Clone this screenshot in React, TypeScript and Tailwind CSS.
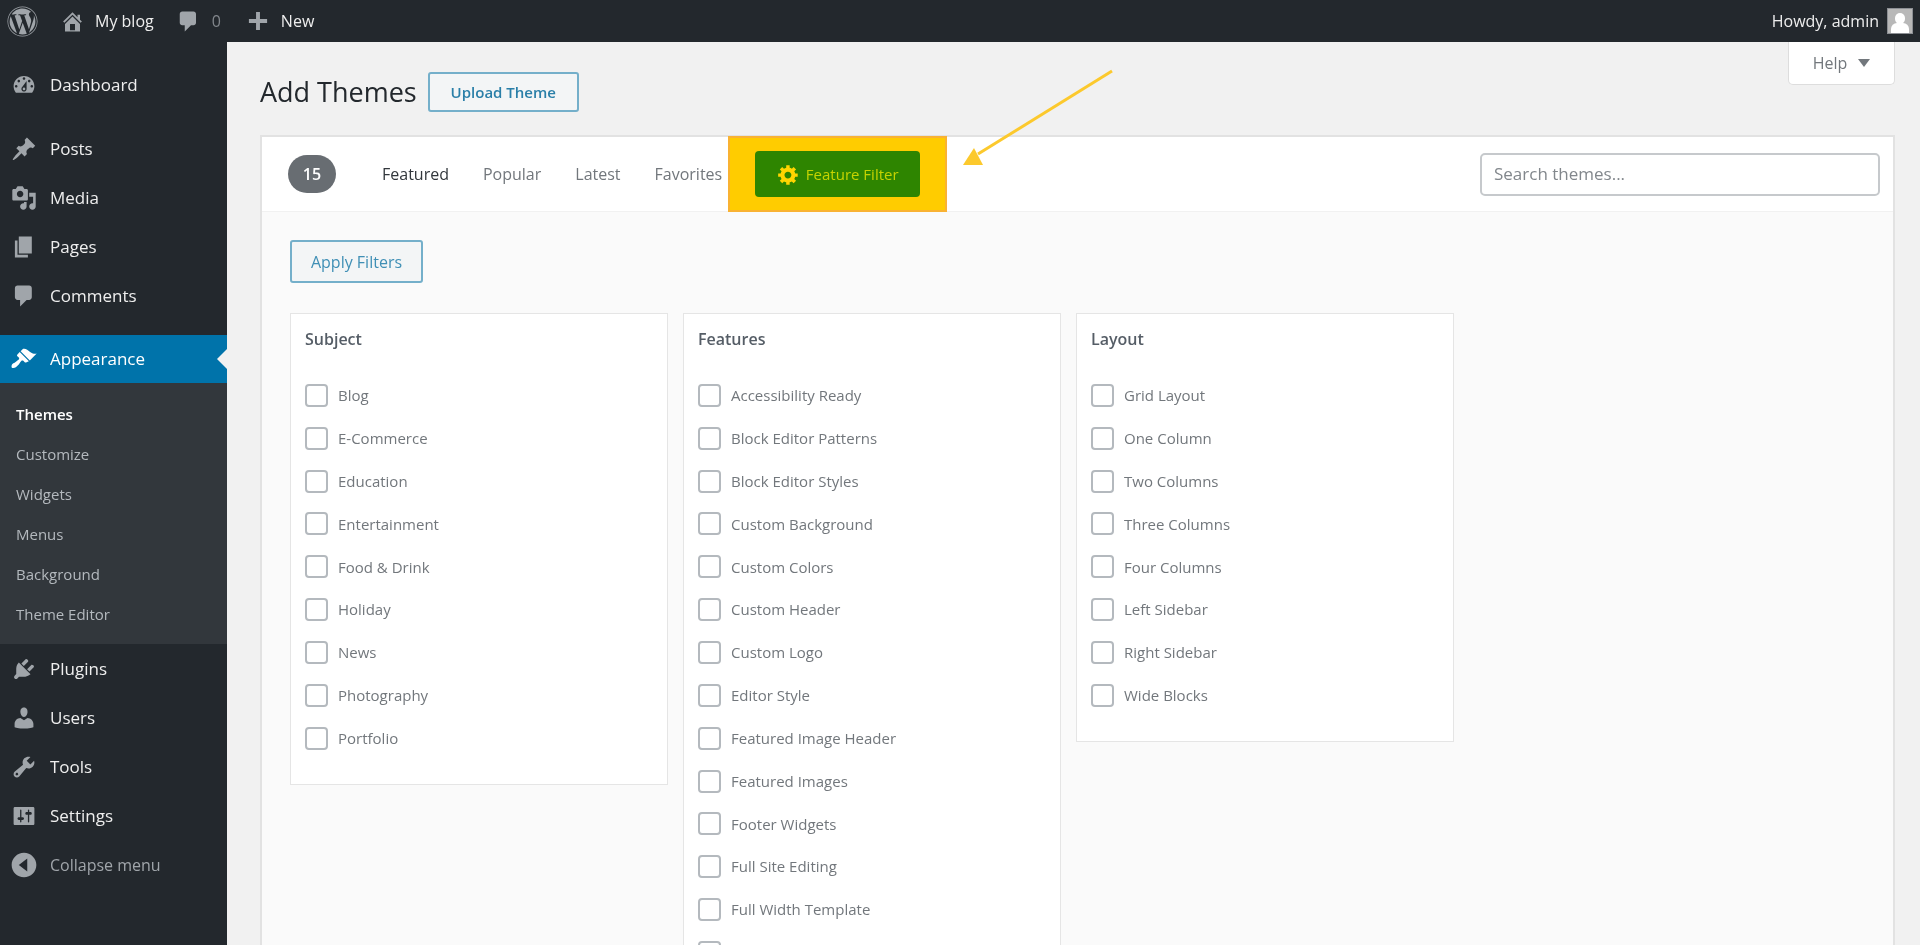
import { FaWordpress } from "react-icons/fa";

const ICONS = {
  home: "M16 8.5l1.53 1.53-1.06 1.06L10 4.62l-6.47 6.47-1.06-1.06L10 2.5l4 4v-2h2v4zm-6-2.46l6 5.99V18H4v-5.97zM12 17v-5H8v5h4z",
  comment: "M5 2h9c1.1 0 2 .9 2 2v7c0 1.1-.9 2-2 2h-2l-5 5v-5H5c-1.1 0-2-.9-2-2V4c0-1.1.9-2 2-2z",
  plus: "M17 8.5v3h-5.5V17h-3v-5.5H3v-3h5.5V3h3v5.5H17z",
  dashboard: "M3.76 16h12.48c1.1-1.37 1.76-3.11 1.76-5 0-4.42-3.58-8-8-8s-8 3.58-8 8c0 1.89.66 3.63 1.76 5zM10 4c.55 0 1 .45 1 1s-.45 1-1 1-1-.45-1-1 .45-1 1-1zM6 6c.55 0 1 .45 1 1s-.45 1-1 1-1-.45-1-1 .45-1 1-1zm8 0c.55 0 1 .45 1 1s-.45 1-1 1-1-.45-1-1 .45-1 1-1zm-5.37 5.55L12 7v6c0 1.1-.9 2-2 2s-2-.9-2-2c0-.57.24-1.08.63-1.45zM4 10c.55 0 1 .45 1 1s-.45 1-1 1-1-.45-1-1 .45-1 1-1zm12 0c.55 0 1 .45 1 1s-.45 1-1 1-1-.45-1-1 .45-1 1-1zm-5 3c0-.55-.45-1-1-1s-1 .45-1 1 .45 1 1 1 1-.45 1-1z",
  post: "M10.44 3.02l1.82-1.82 6.36 6.35-1.83 1.82c-1.05-.68-2.48-.57-3.41.36l-.75.75c-.92.93-1.04 2.35-.35 3.41l-1.83 1.82-2.41-2.41-2.8 2.79c-.42.42-3.38 2.71-3.8 2.29s1.86-3.39 2.28-3.81l2.79-2.79L4.1 9.36l1.83-1.82c1.05.69 2.48.57 3.4-.36l.75-.75c.93-.92 1.05-2.35.36-3.41z",
  media: "M13 11V4c0-.55-.45-1-1-1h-1.67L9 1H5L3.67 3H2c-.55 0-1 .45-1 1v7c0 .55.45 1 1 1h10c.55 0 1-.45 1-1zM7 4.5c1.38 0 2.5 1.12 2.5 2.5S8.38 9.5 7 9.5 4.5 8.38 4.5 7 5.62 4.5 7 4.5zM14 6h5v10.5c0 1.38-1.12 2.5-2.5 2.5S14 17.88 14 16.5s1.12-2.5 2.5-2.5c.17 0 .34.02.5.05V9h-3V6zm-4 8.05V13h2v3.5c0 1.38-1.12 2.5-2.5 2.5S7 17.88 7 16.5 8.12 14 9.5 14c.17 0 .34.02.5.05z",
  page: "M6 15V2h10v13H6zm-1 1h8v2H3V5h2v11z",
  appearance: "M14.48 11.06L7.41 3.99l1.5-1.5c.5-.56 2.3-.47 3.51.32 1.21.8 1.43 1.28 2.91 2.1 1.18.64 2.45 1.26 4.45.85zm-.71.71L6.7 4.7 4.93 6.47c-.39.39-.39 1.02 0 1.41l1.06 1.06c.39.39.39 1.03 0 1.42-.6.6-1.43 1.11-2.21 1.69-.35.26-.7.53-1.01.84C1.43 13.23.4 14.02.4 15.7c0 .54.1.76.3 1 .24.24.5.29 1 .29 1.67 0 2.46-1 3.84-2.37.3-.31.58-.67.84-1.02.58-.78 1.09-1.6 1.69-2.2.39-.39 1.03-.39 1.42 0l1.06 1.06c.39.39 1.02.39 1.41 0z",
  plugins: "M13.11 4.36L9.87 7.6 8 5.73l3.24-3.24c.35-.34 1.05-.2 1.56.32.52.51.66 1.21.31 1.55zm-8 1.77l.91-1.12 9.01 9.01-1.19.84c-.71.71-2.63 1.16-3.82 1.16H6.14L4.9 17.26c-.59.59-1.54.59-2.12 0-.59-.58-.59-1.53 0-2.12l1.24-1.24v-3.88c0-1.13.4-3.19 1.09-3.89zm7.26 3.97l3.24-3.24c.34-.35 1.04-.21 1.55.31.52.51.66 1.21.31 1.55l-3.24 3.25z",
  users: "M10 9.25c-2.27 0-2.73-3.44-2.73-3.44C7 4.02 7.82 2 9.97 2c2.16 0 2.98 2.02 2.71 3.81 0 0-.41 3.44-2.68 3.44zm0 2.57L12.72 10c2.39 0 4.52 2.33 4.52 4.53v2.49s-3.65 1.13-7.24 1.13c-3.65 0-7.24-1.13-7.24-1.13v-2.49c0-2.25 1.94-4.48 4.47-4.48z",
  tools: "M16.68 9.77c-1.34 1.34-3.3 1.67-4.95.99l-5.41 6.52c-.99.99-2.59.99-3.58 0s-.99-2.59 0-3.57l6.52-5.42c-.68-1.65-.35-3.61.99-4.95 1.28-1.28 3.12-1.62 4.72-1.06l-2.89 2.89 2.82 2.82 2.86-2.87c.53 1.58.18 3.39-1.08 4.65zM3.81 16.21c.4.39 1.04.39 1.43 0 .4-.4.4-1.04 0-1.43-.39-.4-1.03-.4-1.43 0-.39.39-.39 1.03 0 1.43z",
  settings: "M18 16V4c0-.55-.45-1-1-1H3c-.55 0-1 .45-1 1v12c0 .55.45 1 1 1h14c.55 0 1-.45 1-1zM8 11h1c.55 0 1 .45 1 1s-.45 1-1 1H8v1.5c0 .28-.22.5-.5.5s-.5-.22-.5-.5V13H6c-.55 0-1-.45-1-1s.45-1 1-1h1V5.5c0-.28.22-.5.5-.5s.5.22.5.5V11zm5-2h-1c-.55 0-1-.45-1-1s.45-1 1-1h1V5.5c0-.28.22-.5.5-.5s.5.22.5.5V7h1c.55 0 1 .45 1 1s-.45 1-1 1h-1v5.5c0 .28-.22.5-.5.5s-.5-.22-.5-.5V9z",
  collapse: "M10 .5c5.22 0 9.5 4.28 9.5 9.5s-4.28 9.5-9.5 9.5S.5 15.22.5 10 4.78.5 10 .5zM12.5 5L6 10l6.500 5V5z",
  gear: "M18 12h-2.18c-.17.7-.44 1.35-.81 1.93l1.54 1.54-2.1 2.1-1.54-1.54c-.58.36-1.23.63-1.91.79V19H8v-2.18c-.68-.16-1.33-.43-1.91-.79l-1.54 1.54-2.12-2.12 1.54-1.54c-.36-.58-.63-1.23-.79-1.91H1V9.03h2.17c.16-.7.44-1.35.8-1.94L2.43 5.55l2.1-2.1 1.54 1.54c.58-.37 1.24-.64 1.93-.81V2h3v2.18c.68.16 1.33.43 1.91.79l1.54-1.54 2.12 2.12-1.54 1.54c.36.59.64 1.24.8 1.94H18V12zm-8.500 1.5c1.66 0 3-1.34 3-3s-1.34-3-3-3-3 1.34-3 3 1.34 3 3 3z",
};

type IconName = keyof typeof ICONS;

const Dashicon = ({ name, className }: { name: IconName; className?: string }) => (
  <svg viewBox="0 0 20 20" className={className} fill="currentColor" fillRule="evenodd">
    <path d={ICONS[name]} />
  </svg>
);

const MenuItem = ({ icon, label, active, muted }: { icon: IconName; label: string; active?: boolean; muted?: boolean }) => (
  <div
    className={
      active
        ? "relative flex items-center h-[48px] pl-[11px] bg-[#0073aa] text-white"
        : "flex items-center h-[49px] pl-[11px] text-[#eeeeee]"
    }
  >
    <Dashicon
      name={icon}
      className={active ? "w-[26px] h-[26px] text-white" : "w-[26px] h-[26px] text-[#a0a5aa]"}
    />
    <span className={muted ? "ml-[13px] text-[16px] text-[#a0a5aa]" : "ml-[13px] text-[17px]"}>{label}</span>
    {active && (
      <span className="absolute right-0 top-[14px] w-0 h-0 border-y-[10px] border-y-transparent border-r-[10px] border-r-[#f1f1f1]" />
    )}
  </div>
);

const Sidebar = () => (
  <aside className="w-[227px] shrink-0 bg-[#23282d] pt-[18px]">
    <MenuItem icon="dashboard" label="Dashboard" />
    <div className="h-[15px]" />
    <MenuItem icon="post" label="Posts" />
    <MenuItem icon="media" label="Media" />
    <MenuItem icon="page" label="Pages" />
    <MenuItem icon="comment" label="Comments" />
    <div className="h-[15px]" />
    <MenuItem icon="appearance" label="Appearance" active />
    <div className="bg-[#32373c] pt-[11px] pb-[10px]">
      <div className="h-[40px] flex items-center pl-[16px] text-[15px] font-semibold text-white">Themes</div>
      {["Customize", "Widgets", "Menus", "Background", "Theme Editor"].map((item) => (
        <div key={item} className="h-[40px] flex items-center pl-[16px] text-[15px] text-[#b4b9be]">
          {item}
        </div>
      ))}
    </div>
    <MenuItem icon="plugins" label="Plugins" />
    <MenuItem icon="users" label="Users" />
    <MenuItem icon="tools" label="Tools" />
    <MenuItem icon="settings" label="Settings" />
    <MenuItem icon="collapse" label="Collapse menu" muted />
  </aside>
);

const TopBar = () => (
  <header className="h-[42px] shrink-0 bg-[#23282d] flex items-center justify-between text-[#eeeeee] text-[16px]">
    <div className="flex items-center">
      <FaWordpress className="ml-[7px] w-[31px] h-[31px] text-[#a0a5aa]" />
      <Dashicon name="home" className="ml-[22px] w-[25px] h-[25px] text-[#a0a5aa]" />
      <span className="ml-[10px] font-medium">My blog</span>
      <Dashicon name="comment" className="ml-[22px] w-[25px] h-[25px] text-[#a0a5aa]" />
      <span className="ml-[11px] text-[#82878c]">0</span>
      <Dashicon name="plus" className="ml-[24px] w-[26px] h-[26px] text-[#a0a5aa]" />
      <span className="ml-[10px] font-medium">New</span>
    </div>
    <div className="flex items-center pr-[7px]">
      <span>Howdy, admin</span>
      <div className="ml-[8px] w-[26px] h-[26px] bg-[#b8b8b8] border border-[#8c8f94] overflow-hidden flex flex-col items-center">
        <div className="mt-[4px] w-[10px] h-[11px] rounded-full bg-white" />
        <div className="mt-[-1px] w-[18px] h-[10px] rounded-t-[6px] bg-white" />
      </div>
    </div>
  </header>
);

const CheckRow = ({ label }: { label: string }) => (
  <label className="flex items-center h-[42.85px] text-[15px] text-[#72777c]">
    <span className="w-[23px] h-[23px] rounded-[4px] border-2 border-[#b4b9be] bg-white shrink-0" />
    <span className="ml-[10px]">{label}</span>
  </label>
);

const FilterGroup = ({ title, items }: { title: string; items: string[] }) => (
  <div className="w-[378px] bg-white border border-[#e5e5e5] pt-[13px] pb-[24px] px-[14px]">
    <h4 className="text-[16px] font-semibold text-[#555d66] mb-[23px]">{title}</h4>
    {items.map((item) => (
      <CheckRow key={item} label={item} />
    ))}
  </div>
);

const SUBJECT = ["Blog", "E-Commerce", "Education", "Entertainment", "Food & Drink", "Holiday", "News", "Photography", "Portfolio"];
const FEATURES = [
  "Accessibility Ready",
  "Block Editor Patterns",
  "Block Editor Styles",
  "Custom Background",
  "Custom Colors",
  "Custom Header",
  "Custom Logo",
  "Editor Style",
  "Featured Image Header",
  "Featured Images",
  "Footer Widgets",
  "Full Site Editing",
  "Full Width Template",
  "Post Formats",
];
const LAYOUT = ["Grid Layout", "One Column", "Two Columns", "Three Columns", "Four Columns", "Left Sidebar", "Right Sidebar", "Wide Blocks"];

const Content = () => (
  <main className="flex-1 min-w-0 pl-[33px] pr-[25px]">
    <div className="h-[93px] flex items-start justify-between">
      <div className="flex items-center mt-[30px]">
        <h1 className="text-[27px] leading-[40px] text-[#23282d]">Add Themes</h1>
        <button className="ml-[11px] h-[40px] w-[151px] rounded-[3px] border-2 border-[#74afca] bg-[#f3f5f6] text-[15px] font-semibold text-[#2a7fa8]">
          Upload Theme
        </button>
      </div>
      <div className="w-[107px] h-[43px] bg-white border border-t-0 border-[#dddddd] rounded-b-[5px] flex items-center justify-center text-[16px] text-[#72777c]">
        Help
        <span className="ml-[11px] w-0 h-0 border-x-[6px] border-x-transparent border-t-[8px] border-t-[#72777c]" />
      </div>
    </div>

    <section className="border-2 border-b-0 border-[#e2e2e2] bg-[#fafafa] h-[900px]">
      <div className="h-[75px] bg-white border-b border-[#f1f1f1] flex items-center">
        <span className="ml-[26px] w-[48px] h-[38px] rounded-full bg-[#686d72] text-white font-semibold text-[16px] flex items-center justify-center">
          15
        </span>
        <nav className="flex items-center text-[16px] text-[#72777c]">
          <span className="ml-[46px] text-[#32373c]">Featured</span>
          <span className="ml-[34px]">Popular</span>
          <span className="ml-[34px]">Latest</span>
          <span className="ml-[34px]">Favorites</span>
        </nav>
        <div className="ml-[6px] w-[219px] h-[76px] bg-[#ffcc00] border-2 border-[#f9b233] flex items-center justify-center">
          <button className="w-[165px] h-[46px] rounded-[4px] bg-[#2e8500] text-[#c6d300] text-[15px] font-medium flex items-center justify-center">
            <Dashicon name="gear" className="w-[23px] h-[23px] text-[#ffd500] mr-[6px]" />
            Feature Filter
          </button>
        </div>
        <div className="ml-auto mr-[13px] w-[400px] h-[43px] rounded-[5px] border-2 border-[#c6c9cc] bg-white flex items-center pl-[12px] text-[17px] text-[#82878c]">
          Search themes...
        </div>
      </div>
      <div className="px-[28px] pt-[28px]">
        <button className="w-[133px] h-[43px] rounded-[3px] border-2 border-[#74afca] bg-[#f3f5f6] text-[16px] text-[#3f8fb5]">
          Apply Filters
        </button>
        <div className="mt-[30px] flex items-start gap-[15px]">
          <FilterGroup title="Subject" items={SUBJECT} />
          <FilterGroup title="Features" items={FEATURES} />
          <FilterGroup title="Layout" items={LAYOUT} />
        </div>
      </div>
    </section>
  </main>
);

export default function App() {
  return (
    <div className="relative h-[945px] w-[1920px] overflow-hidden bg-[#f1f1f1] flex flex-col font-['Open_Sans',sans-serif] blur-[0.5px]">
      <TopBar />
      <div className="flex flex-1 min-h-0">
        <Sidebar />
        <Content />
      </div>
      {/* callout arrow over the page */}
      <svg className="absolute left-[950px] top-[60px] w-[175px] h-[120px]" viewBox="0 0 175 120">
        <line x1="162" y1="11" x2="28" y2="94" stroke="#fcc92d" strokeWidth="3" />
        <polygon points="13,105 24,88 33,105" fill="#fcc92d" />
      </svg>
    </div>
  );
}
